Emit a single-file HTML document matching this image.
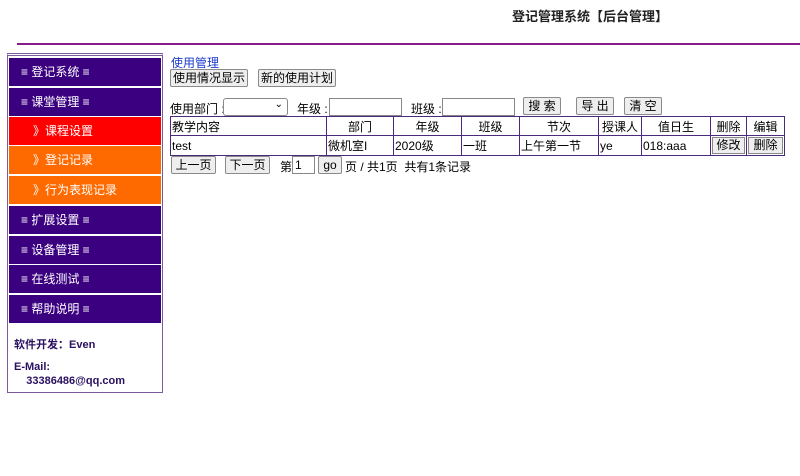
<!DOCTYPE html>
<html><head><meta charset="utf-8"><style>
*{margin:0;padding:0;box-sizing:border-box}
body{width:800px;height:476px;background:#fff;font-family:"Liberation Sans","Microsoft YaHei","Noto Sans CJK SC",sans-serif;font-size:12px;color:#000;position:relative;overflow:hidden}
.a{position:absolute}
.title{left:512px;top:6px;font-weight:bold;font-size:13px;color:#222}
.hr{left:17px;top:43px;width:783px;height:2px;background:#8a1c8a}
.side{left:7px;top:53px;width:156px;height:340px;border:1px solid #7a5a9a;border-top:3px double #7a5a9a;}
.m{position:absolute;left:1px;width:152px;height:28px;line-height:28px;color:#fff;font-size:12px}
.p{background:#3a0080;padding-left:12px}
.r{background:#ff0000;padding-left:24px}
.o{background:#ff6a00;padding-left:24px}
.foot{position:absolute;left:6px;top:282px;color:#2a1060;font-weight:bold;font-size:11px;line-height:14px}
.btn{position:absolute;height:18px;border:1px solid #8a8a8a;border-radius:2px;background:#eee;font-size:12px;line-height:16px;text-align:center;color:#000}
.inp{position:absolute;height:18px;border:1px solid #888;background:#fff}
table{position:absolute;left:170px;top:116px;border-collapse:collapse;border:1px solid #4a2a7a}
td{border:1px solid #4a2a7a;height:19px;padding:0 1px;font-size:12px}
</style></head><body>
<div class="a title">登记管理系统【后台管理】</div>
<div class="a hr"></div>
<div class="a side">
<div class="m p" style="top:2px">≡ 登记系统 ≡</div>
<div class="m p" style="top:32px">≡ 课堂管理 ≡</div>
<div class="m r" style="top:61px">》课程设置</div>
<div class="m o" style="top:90px">》登记记录</div>
<div class="m o" style="top:120px">》行为表现记录</div>
<div class="m p" style="top:150px">≡ 扩展设置 ≡</div>
<div class="m p" style="top:180px">≡ 设备管理 ≡</div>
<div class="m p" style="top:209px">≡ 在线测试 ≡</div>
<div class="m p" style="top:239px">≡ 帮助说明 ≡</div>
<div class="foot">软件开发：Even<br><div style="height:8px"></div>E-Mail:<br>&nbsp;&nbsp;&nbsp;&nbsp;33386486@qq.com</div>
</div>
<div class="a" style="left:171px;top:54px;color:#1a3acc">使用管理</div>
<div class="btn" style="left:170px;top:69px;width:78px">使用情况显示</div>
<div class="btn" style="left:258px;top:69px;width:78px">新的使用计划</div>
<div class="a" style="left:170px;top:100px">使用部门 : </div>
<div class="inp" style="left:223px;top:98px;width:65px;border-radius:3px"><span style="position:absolute;right:4px;top:0;font-size:10px">&#8964;</span></div>
<div class="a" style="left:297px;top:100px">年级 : </div>
<div class="inp" style="left:329px;top:98px;width:73px"></div>
<div class="a" style="left:411px;top:100px">班级 : </div>
<div class="inp" style="left:442px;top:98px;width:73px"></div>
<div class="btn" style="left:523px;top:97px;width:38px">搜 索</div>
<div class="btn" style="left:576px;top:97px;width:38px">导 出</div>
<div class="btn" style="left:624px;top:97px;width:38px">清 空</div>
<table>
<tr><td style="width:156px">教学内容</td><td style="width:67px;text-align:center">部门</td><td style="width:68px;text-align:center">年级</td><td style="width:58px;text-align:center">班级</td><td style="width:79px;text-align:center">节次</td><td style="width:43px;text-align:center">授课人</td><td style="width:69px;text-align:center">值日生</td><td style="width:36px;text-align:center">删除</td><td style="width:38px;text-align:center">编辑</td></tr>
<tr><td>test</td><td>微机室I</td><td>2020级</td><td>一班</td><td>上午第一节</td><td>ye</td><td>018:aaa</td><td style="padding:1px"><div style="border:1px solid #888;background:#eee;text-align:center;height:17px;line-height:15px">修改</div></td><td style="padding:1px"><div style="border:1px solid #888;background:#eee;text-align:center;height:17px;line-height:15px">删除</div></td></tr>
</table>
<div class="btn" style="left:171px;top:156px;width:45px">上一页</div>
<div class="btn" style="left:225px;top:156px;width:45px">下一页</div>
<div class="a" style="left:280px;top:158px">第</div>
<div class="inp" style="left:292px;top:156px;width:23px;padding-left:2px;line-height:16px">1</div>
<div class="btn" style="left:318px;top:156px;width:24px">go</div>
<div class="a" style="left:345px;top:158px">页 / 共1页&nbsp;&nbsp;共有1条记录</div>
</body></html>
